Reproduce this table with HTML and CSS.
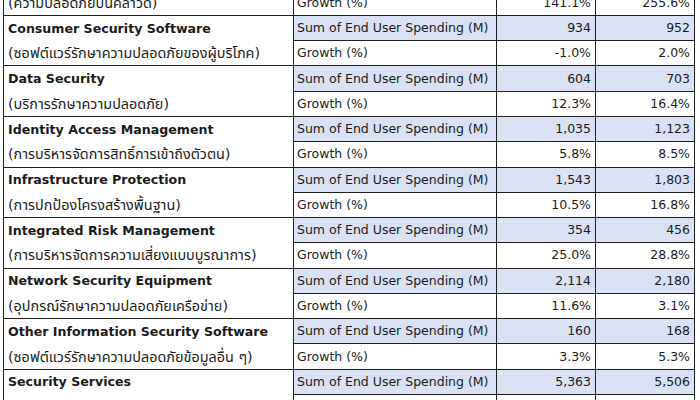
FILE: index.html
```html
<!DOCTYPE html>
<html lang="th">
<head>
<meta charset="utf-8">
<title>Security Spending</title>
<link rel="stylesheet" href="styles.css">
</head>
<body>
<div class="wrap">
<table class="spend">
  <colgroup>
    <col class="c-name"><col class="c-metric"><col class="c-val"><col class="c-val">
  </colgroup>
  <tbody>
    <tr class="sum"><td class="name">Cloud Security</td><td class="metric">Sum of End User Spending (M)</td><td class="num">13</td><td class="num">46</td></tr>
    <tr class="growth"><td class="thai">(ความปลอดภัยบนคลาวด์)</td><td class="metric">Growth (%)</td><td class="num">141.1%</td><td class="num">255.6%</td></tr>

    <tr class="sum"><td class="name">Consumer Security Software</td><td class="metric">Sum of End User Spending (M)</td><td class="num">934</td><td class="num">952</td></tr>
    <tr class="growth"><td class="thai">(ซอฟต์แวร์รักษาความปลอดภัยของผู้บริโภค)</td><td class="metric">Growth (%)</td><td class="num">-1.0%</td><td class="num">2.0%</td></tr>

    <tr class="sum"><td class="name">Data Security</td><td class="metric">Sum of End User Spending (M)</td><td class="num">604</td><td class="num">703</td></tr>
    <tr class="growth"><td class="thai">(บริการรักษาความปลอดภัย)</td><td class="metric">Growth (%)</td><td class="num">12.3%</td><td class="num">16.4%</td></tr>

    <tr class="sum"><td class="name">Identity Access Management</td><td class="metric">Sum of End User Spending (M)</td><td class="num">1,035</td><td class="num">1,123</td></tr>
    <tr class="growth"><td class="thai">(การบริหารจัดการสิทธิ์การเข้าถึงตัวตน)</td><td class="metric">Growth (%)</td><td class="num">5.8%</td><td class="num">8.5%</td></tr>

    <tr class="sum"><td class="name">Infrastructure Protection</td><td class="metric">Sum of End User Spending (M)</td><td class="num">1,543</td><td class="num">1,803</td></tr>
    <tr class="growth"><td class="thai">(การปกป้องโครงสร้างพื้นฐาน)</td><td class="metric">Growth (%)</td><td class="num">10.5%</td><td class="num">16.8%</td></tr>

    <tr class="sum"><td class="name">Integrated Risk Management</td><td class="metric">Sum of End User Spending (M)</td><td class="num">354</td><td class="num">456</td></tr>
    <tr class="growth"><td class="thai">(การบริหารจัดการความเสี่ยงแบบบูรณาการ)</td><td class="metric">Growth (%)</td><td class="num">25.0%</td><td class="num">28.8%</td></tr>

    <tr class="sum"><td class="name">Network Security Equipment</td><td class="metric">Sum of End User Spending (M)</td><td class="num">2,114</td><td class="num">2,180</td></tr>
    <tr class="growth"><td class="thai">(อุปกรณ์รักษาความปลอดภัยเครือข่าย)</td><td class="metric">Growth (%)</td><td class="num">11.6%</td><td class="num">3.1%</td></tr>

    <tr class="sum"><td class="name">Other Information Security Software</td><td class="metric">Sum of End User Spending (M)</td><td class="num">160</td><td class="num">168</td></tr>
    <tr class="growth"><td class="thai">(ซอฟต์แวร์รักษาความปลอดภัยข้อมูลอื่น ๆ)</td><td class="metric">Growth (%)</td><td class="num">3.3%</td><td class="num">5.3%</td></tr>

    <tr class="sum"><td class="name">Security Services</td><td class="metric">Sum of End User Spending (M)</td><td class="num">5,363</td><td class="num">5,506</td></tr>
    <tr class="growth"><td class="thai">(บริการด้านความปลอดภัย)</td><td class="metric">Growth (%)</td><td class="num">3.7%</td><td class="num">2.7%</td></tr>
  </tbody>
</table>
</div>
</body>
</html>
```

FILE: styles.css
```css
html, body {
  margin: 0;
  padding: 0;
  background: #ffffff;
}

.wrap {
  width: 700px;
  height: 400px;
  overflow: hidden;
}

.spend {
  margin: -35.6px 0 0 3px;
  border-collapse: separate;
  border-spacing: 0;
  table-layout: fixed;
  width: 691px;
  border-left: 1px solid #1e1e1e;
  border-top: 1px solid #1e1e1e;
  font-family: "DejaVu Sans", Tahoma, "Noto Sans Thai", "Noto Sans", sans-serif;
  font-size: 12.5px;
  color: #1b1b1b;
}

.c-name { width: 290px; }
.c-metric { width: 203px; }
.c-val { width: 99px; }

.spend td {
  height: 25.28px;
  box-sizing: border-box;
  padding: 0 4px;
  border-right: 1px solid #1e1e1e;
  border-bottom: 1px solid #1e1e1e;
  white-space: nowrap;
  overflow: hidden;
  vertical-align: middle;
  line-height: 16px;
}

.spend tr.sum td {
  background: #d9e1f2;
}

.spend tr.sum td.name {
  background: #ffffff;
  font-weight: bold;
  font-size: 12.6px;
  border-bottom: none;
}

.spend td.thai {
  font-size: 14.4px;
}

.spend td.metric {
  padding-left: 3px;
}

.spend td.num {
  text-align: right;
  padding-right: 4px;
}
```
